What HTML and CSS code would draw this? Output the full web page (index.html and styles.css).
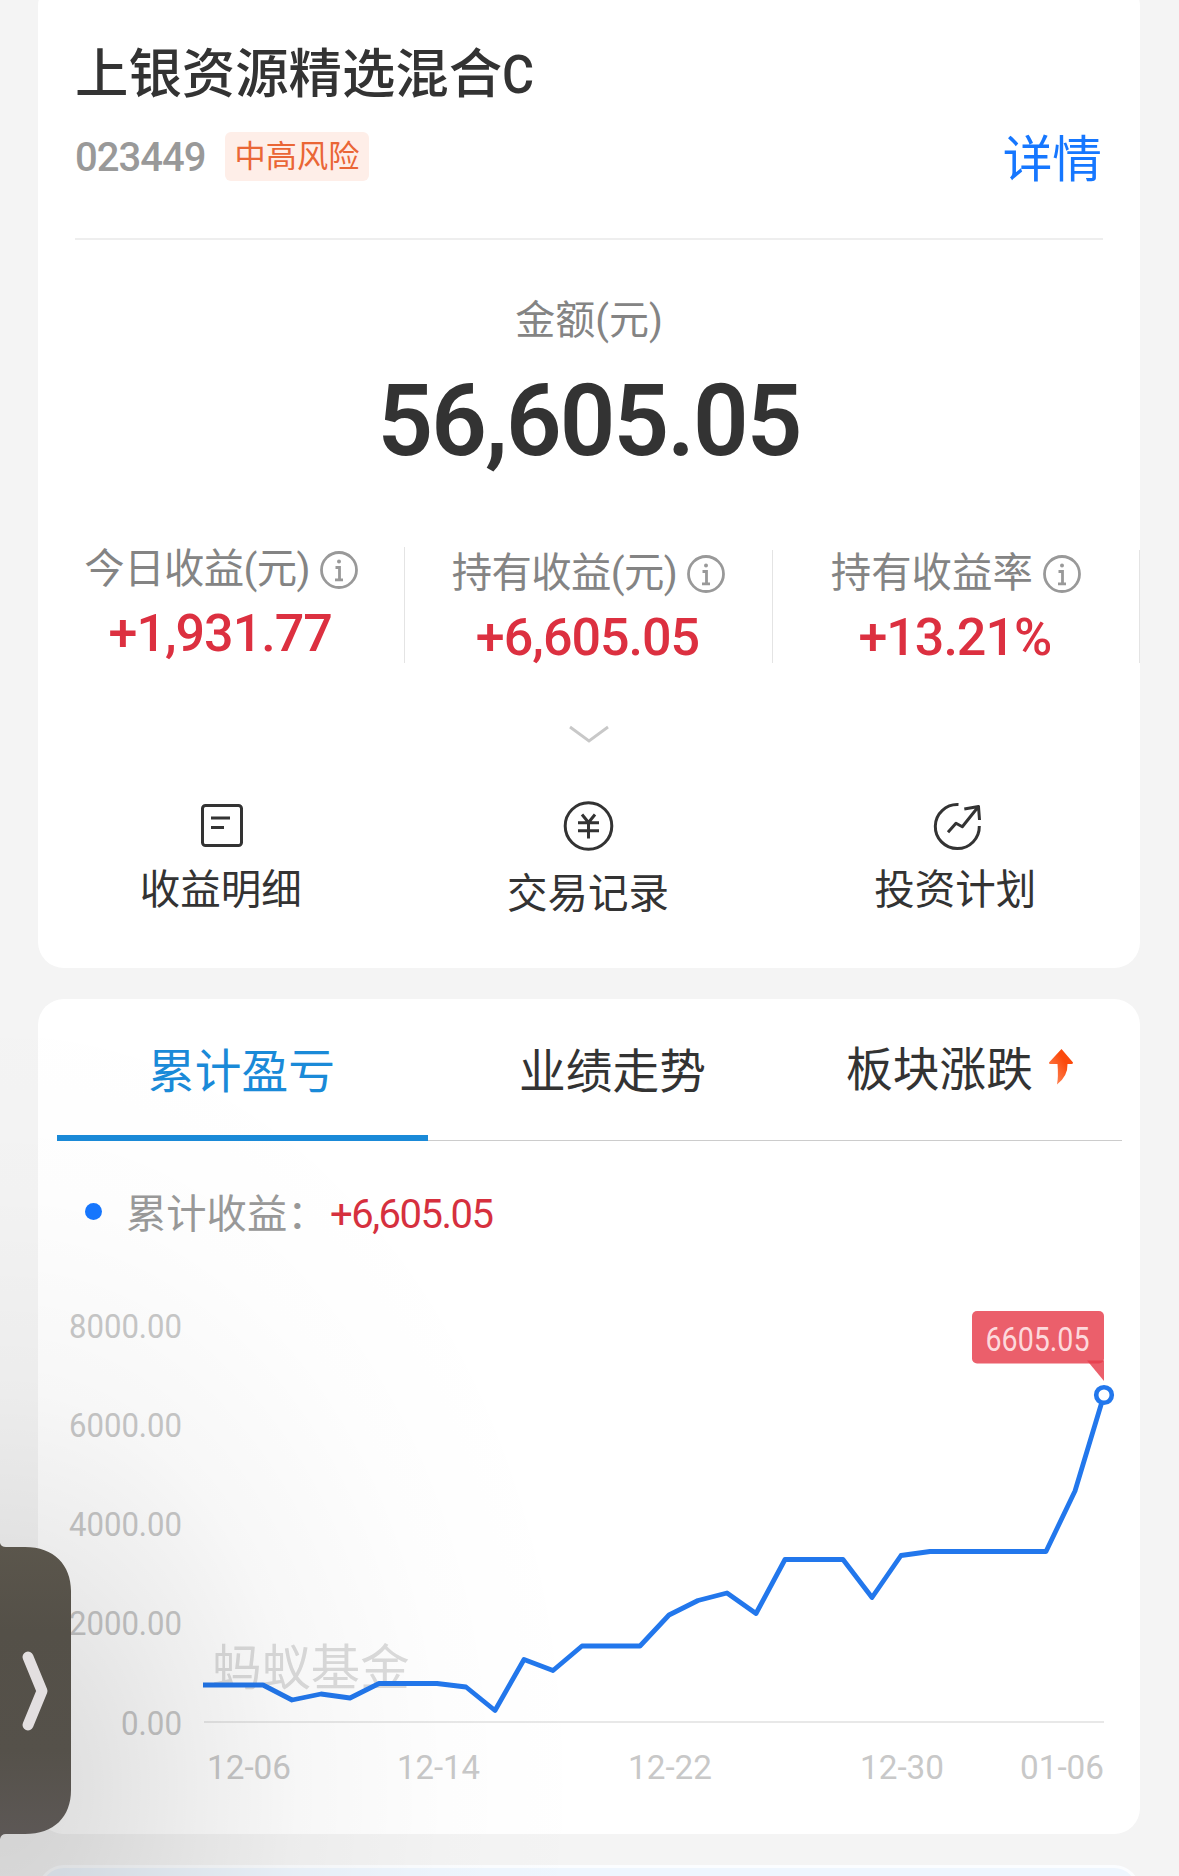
FILE: index.html
```html
<!DOCTYPE html>
<html lang="zh-CN">
<head>
  <title>上银资源精选混合C</title>
  <meta charset="UTF-8" />
  <meta name="viewport" content="width=device-width, initial-scale=1.0"/>
  <link rel="stylesheet" href="styles.css">
</head>
<body>
  <div class="page">
    <section class="card summary">
      <h1 class="fund-name">上银资源精选混合<span class="latin">C</span></h1>
      <div class="fund-meta">
        <span class="fund-code">023449</span>
        <span class="risk">中高风险</span>
        <a class="detail-link">详情</a>
      </div>

      <div class="amount-label">金额(元)</div>
      <div class="amount">56,605.05</div>

      <div class="stats">
        <div class="stat first">
          <div class="stat-label tight">今日收益(元)
            <svg class="info" viewBox="0 0 38 38"><circle cx="19" cy="19" r="17.5"/><path d="M15.5 16.5H19.5V28.5M15 28.8H23"/><circle class="dot" cx="19" cy="10.5" r="2"/></svg>
          </div>
          <div class="stat-value">+1,931.77</div>
        </div>
        <div class="stat">
          <div class="stat-label tight">持有收益(元)
            <svg class="info" viewBox="0 0 38 38"><circle cx="19" cy="19" r="17.5"/><path d="M15.5 16.5H19.5V28.5M15 28.8H23"/><circle class="dot" cx="19" cy="10.5" r="2"/></svg>
          </div>
          <div class="stat-value">+6,605.05</div>
        </div>
        <div class="stat">
          <div class="stat-label">持有收益率
            <svg class="info" viewBox="0 0 38 38"><circle cx="19" cy="19" r="17.5"/><path d="M15.5 16.5H19.5V28.5M15 28.8H23"/><circle class="dot" cx="19" cy="10.5" r="2"/></svg>
          </div>
          <div class="stat-value">+13.21%</div>
        </div>
      </div>

      <svg class="expand" viewBox="0 0 42 20"><path d="M2 2L21 16L40 2"/></svg>

      <div class="actions">
        <div class="action">
          <svg class="action-icon" viewBox="0 0 52 52"><rect x="6.5" y="5.5" width="39" height="40" rx="3"/><path d="M15 18H34M15 27.5H28"/></svg>
          <span>收益明细</span>
        </div>
        <div class="action middle">
          <svg class="action-icon" viewBox="0 0 52 52"><circle cx="25.5" cy="26" r="23.3"/><path d="M19 14.5L25.5 22.5L32 14.5M15 22.7H36M15 30.7H36M25.5 22V38.5"/></svg>
          <span>交易记录</span>
        </div>
        <div class="action">
          <svg class="action-icon" viewBox="0 0 52 52"><path d="M28.5 4.6A22 22 0 1 0 49.3 26M18 32.3L26 23.3L32.3 26.7L48.3 6.7M34.3 9L48.5 6.5L49.5 20"/></svg>
          <span>投资计划</span>
        </div>
      </div>
    </section>

    <section class="card profit">
      <div class="tabs">
        <div class="tab active">累计盈亏</div>
        <div class="tab">业绩走势</div>
        <div class="tab last">板块涨跌
          <svg class="hot" viewBox="0 0 24 36">
            <defs><linearGradient id="hot" x1="1" y1="0" x2="0" y2="1"><stop offset=".35" stop-color="#fb4a0c"/><stop offset="1" stop-color="#ff9468"/></linearGradient></defs>
            <path fill="url(#hot)" d="M12.5 0L24 13.5Q24 15 22.5 15H18.5Q19 27 8 35.5Q9.5 28 8.5 15H1Q0 15 0 13.5Z"/>
          </svg>
        </div>
      </div>

      <div class="legend">
        <i class="legend-dot"></i>
        <span class="legend-label">累计收益：</span>
        <span class="legend-value">+6,605.05</span>
      </div>

      <svg class="chart" viewBox="38 1260 1102 574">
        <g class="axis-label">
          <text x="69" y="1338" textLength="113" lengthAdjust="spacingAndGlyphs">8000.00</text>
          <text x="69" y="1437" textLength="113" lengthAdjust="spacingAndGlyphs">6000.00</text>
          <text x="69" y="1536" textLength="113" lengthAdjust="spacingAndGlyphs">4000.00</text>
          <text x="69" y="1635" textLength="113" lengthAdjust="spacingAndGlyphs">2000.00</text>
          <text x="121" y="1735" textLength="61" lengthAdjust="spacingAndGlyphs">0.00</text>
          <text x="207" y="1779" textLength="84" lengthAdjust="spacingAndGlyphs">12-06</text>
          <text x="397" y="1779" textLength="83" lengthAdjust="spacingAndGlyphs">12-14</text>
          <text x="628" y="1779" textLength="84" lengthAdjust="spacingAndGlyphs">12-22</text>
          <text x="860" y="1779" textLength="84" lengthAdjust="spacingAndGlyphs">12-30</text>
          <text x="1020" y="1779" textLength="84" lengthAdjust="spacingAndGlyphs">01-06</text>
        </g>
        <text class="watermark" x="212" y="1685">蚂蚁基金</text>
        <path class="axis" d="M204 1722H1104"/>
        <polyline class="line" points="203,1685 263,1685 292,1700 321,1694 350,1698 379,1683.5 437,1683.5 466,1687 495,1710.5 524,1659.5 553,1670.5 582,1646 640,1646 669,1615 698,1600.5 727,1593 756,1613.5 785,1559.5 843,1559.5 872,1597.5 901,1555.5 930,1551.5 1046,1551.5 1075,1491 1104,1395"/>
        <circle class="marker" cx="1104" cy="1395" r="7.8"/>
        <rect class="tip" x="972" y="1311" width="132" height="52.5" rx="5"/>
        <path class="tip" d="M1087 1360.5H1104V1381Z"/>
        <text class="tip-text" x="985.5" y="1350.5" textLength="104" lengthAdjust="spacingAndGlyphs">6605.05</text>
      </svg>
    </section>

    <section class="card next"></section>
  </div>

  <!-- floating drawer handle with its shadow -->
  <div class="drawer-shadow"></div>
  <svg class="drawer" viewBox="0 0 72 296">
    <defs><linearGradient id="drawer" x1="0" y1="0" x2="0" y2="1"><stop offset="0" stop-color="#5b564c"/><stop offset=".3" stop-color="#545048"/><stop offset=".7" stop-color="#55514a"/><stop offset="1" stop-color="#5d5856"/></linearGradient></defs>
    <path fill="url(#drawer)" d="M0 0Q1 4 6 4H25C54 4 71 22 71 48V247C71 274 54 291 25 291H6Q1 291 0 296Z"/>
    <path class="drawer-arrow" d="M28 114L42 148L28 182"/>
  </svg>
</body>
</html>
```

FILE: styles.css
```css
:root {
  --bg: #f4f4f4;
  --text: #333333;
  --muted: #848484;
  --red: #dc3040;
  --blue: #1677ff;
  --tab-blue: #1a8ad8;
}
* {
  box-sizing: border-box;
}
body {
  margin: 0;
  height: 1876px;
  overflow: hidden;
  position: relative;
  background: var(--bg);
  color: var(--text);
  font-family: Roboto, "Noto Sans CJK SC", sans-serif;
}
.page {
  padding: 0 39px 0 38px;
  margin-top: -20px;
  display: flex;
  flex-direction: column;
  gap: 31px;
}
.card {
  background: #fff;
  border-radius: 26px;
}
.summary {
  height: 988px;
  padding-top: 57px;
  display: flex;
  flex-direction: column;
}
.fund-name {
  margin: 0 0 0 37px;
  font-size: 53.4px;
  line-height: 76px;
  font-weight: 500;
}
.latin {
  display: inline-block;
  transform: scaleX(0.92);
  transform-origin: left;
}
.fund-meta {
  display: flex;
  align-items: center;
  margin: 0 37px;
  height: 127px;
  padding-bottom: 39px;
  border-bottom: 2px solid #eeeeee;
}
.fund-code {
  font-size: 40px;
  line-height: 50px;
  font-weight: 500;
  letter-spacing: -1px;
  color: #999;
  width: 150px;
  padding-top: 4px;
}
.risk {
  width: 144px;
  height: 49px;
  line-height: 49px;
  border-radius: 6px;
  background: #feeee8;
  color: #ea6636;
  font-size: 31.2px;
  text-align: center;
}
.detail-link {
  margin-left: auto;
  padding: 8px 1px 0 0;
  font-size: 49.7px;
  line-height: 60px;
  color: var(--blue);
}
.amount-label {
  margin-top: 51px;
  text-align: center;
  font-size: 40px;
  line-height: 60px;
  color: var(--muted);
}
.amount {
  text-align: center;
  font-size: 100px;
  line-height: 120px;
  font-weight: 600;
  letter-spacing: -2px;
  margin-top: 10px;
  transform: scaleX(0.975);
}
.stats {
  display: flex;
  height: 113px;
  margin-top: 69px;
}
.stat {
  flex: 1;
  border-right: 1px solid #e4e4e4;
  padding-top: 1px;
  text-align: center;
}
.stat.first {
  padding-top: 0;
  margin-top: -3px;
  height: 116px;
}
.stat-label {
  display: flex;
  justify-content: center;
  align-items: center;
  gap: 10px;
  font-size: 40.4px;
  line-height: 46px;
  color: var(--muted);
}
.stat-label.tight {
  letter-spacing: -0.6px;
}
.info {
  width: 38px;
  height: 38px;
  fill: none;
  stroke: #999;
  stroke-width: 2.8;
}
.info .dot {
  fill: #999;
  stroke: none;
}
.stat-value {
  font-size: 52px;
  line-height: 60px;
  font-weight: 500;
  letter-spacing: -1px;
  margin: 11px 2px 0 0;
  color: var(--red);
}
.expand {
  width: 42px;
  height: 20px;
  margin: 62px auto 0;
  fill: none;
  stroke: #c8c8c8;
  stroke-width: 2.8;
}
.actions {
  display: flex;
  margin-top: 55px;
}
.action {
  flex: 1;
  display: flex;
  flex-direction: column;
  align-items: center;
  font-size: 40.5px;
  line-height: 60px;
}
.action span {
  margin: 8px 2px 0 0;
}
.action.middle span {
  margin-top: 12px;
}
.action-icon {
  width: 52px;
  height: 52px;
  fill: none;
  stroke: #333;
  stroke-width: 3;
  stroke-linejoin: round;
}
.profit {
  height: 835px;
  display: flex;
  flex-direction: column;
}
.tabs {
  display: flex;
  margin: 0 18px 0 19px;
  height: 142px;
  border-bottom: 1px solid #ccc;
}
.tab {
  width: 371px;
  height: 142px;
  padding: 43px 2px 0 0;
  font-size: 46.7px;
  line-height: 60px;
  text-align: center;
}
.tab.active {
  color: var(--tab-blue);
  border-bottom: 6px solid var(--tab-blue);
}
.tab.last {
  width: 323px;
  padding-top: 41px;
  display: flex;
  justify-content: center;
  gap: 16px;
}
.hot {
  width: 24px;
  height: 36px;
  margin-top: 9px;
}
.legend {
  display: flex;
  align-items: center;
  height: 119px;
  padding: 28px 0 0 47px;
  line-height: 60px;
}
.legend-dot {
  width: 17px;
  height: 17px;
  margin-top: -6px;
  border-radius: 50%;
  background: var(--blue);
}
.legend-label {
  margin-left: 24px;
  width: 204px;
  font-size: 40.3px;
  color: #999;
}
.legend-value {
  font-size: 40px;
  letter-spacing: -1.5px;
  color: #d6303e;
}
.chart {
  display: block;
  width: 1102px;
  height: 574px;
  flex: none;
}
.axis-label {
  font-size: 34px;
  fill: #c8c8c8;
}
.watermark {
  font-size: 49.4px;
  fill: #dcdcdc;
}
.axis {
  stroke: #e8e8e8;
  stroke-width: 2;
}
.line {
  fill: none;
  stroke: #2277ec;
  stroke-width: 4.8;
  stroke-linejoin: round;
}
.marker {
  fill: #fff;
  stroke: #2277ec;
  stroke-width: 4.6;
}
.tip {
  fill: #e63c4b;
  fill-opacity: 0.82;
}
.tip-text {
  font-size: 32.5px;
  fill: #fdd9dc;
}
.next {
  height: 60px;
  border: 3px solid #fbfdff;
  background: #eef6fe;
}
.drawer-shadow {
  position: absolute;
  left: 0;
  bottom: 0;
  width: 640px;
  height: 900px;
  background: radial-gradient(ellipse 600px 800px at 0 90%, rgba(0,0,0,0.14) 0%, rgba(0,0,0,0.115) 15%, rgba(0,0,0,0.07) 32%, rgba(0,0,0,0.033) 50%, rgba(0,0,0,0.009) 75%, rgba(0,0,0,0) 100%);
}
.drawer {
  position: absolute;
  left: 0;
  top: 1543px;
  width: 72px;
  height: 296px;
}
.drawer-arrow {
  fill: none;
  stroke: #e3dfe0;
  stroke-width: 11;
  stroke-linecap: round;
  stroke-linejoin: round;
}
```
